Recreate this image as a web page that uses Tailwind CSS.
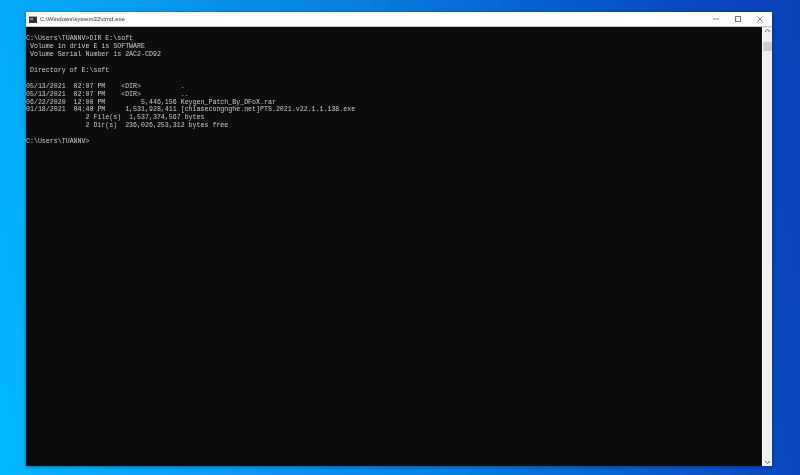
<!DOCTYPE html>
<html>
<head>
<meta charset="utf-8">
<script src="https://cdn.jsdelivr.net/npm/@tailwindcss/browser@4"></script>
</head>
<body class="m-0 w-[800px] h-[475px] overflow-hidden bg-[linear-gradient(78deg,#00b8ff_0%,#0a9ef0_25%,#0880e0_50%,#0660cc_72%,#0a48c0_88%,#0b42b8_100%)]">
<div class="pt-3 pl-[26px]">
<div class="w-[746px] h-[454px] flex flex-col bg-white shadow-[0_1px_4px_rgba(0,0,40,0.4)]">
  <div class="h-[15px] flex items-center bg-white border-b border-[#c8c8c8]">
    <svg class="ml-[3px] w-[8px] h-[7px]" viewBox="0 0 8 7"><rect width="8" height="7" fill="#333"/><rect x="0" y="0" width="8" height="1" fill="#aaa"/><rect x="1" y="2.500" width="3" height="1" fill="#ddd"/></svg>
    <span class="ml-[3px] text-[6.1px] leading-[8px] text-[#333] blur-[0.2px] font-['Liberation_Sans',sans-serif]">C:\Windows\system32\cmd.exe</span>
    <div class="ml-auto flex items-center h-full">
      <svg class="w-[6px] h-[6px] mr-[16px]" viewBox="0 0 6 6"><path d="M0 3h6" stroke="#888" stroke-width="1"/></svg>
      <svg class="w-[6px] h-[6px] mr-[16px]" viewBox="0 0 6 6"><rect x=".5" y=".5" width="5" height="5" fill="none" stroke="#777"/></svg>
      <svg class="w-[6px] h-[6px] mr-[9px]" viewBox="0 0 6 6"><path d="M.5.5l5 5M5.500.5l-5 5" stroke="#777"/></svg>
    </div>
  </div>
  <div class="flex-1 flex min-h-0">
    <div class="flex-1 bg-[#0c0c0c] overflow-hidden pt-[8px]">
    <pre class="m-0 text-[#cccccc] text-[6.62px] leading-[7.93px] blur-[0.25px] font-['Liberation_Mono',monospace]">C:\Users\TUANNV>DIR E:\soft
 Volume in drive E is SOFTWARE
 Volume Serial Number is 2AC2-CD92

 Directory of E:\soft

05/13/2021  02:07 PM    &lt;DIR&gt;          .
05/13/2021  02:07 PM    &lt;DIR&gt;          ..
06/22/2020  12:00 PM         5,446,156 Keygen_Patch_By_DFoX.rar
01/18/2021  04:40 PM     1,531,928,411 [chiasecongnghe.net]PTS.2021.v22.1.1.138.exe
               2 File(s)  1,537,374,567 bytes
               2 Dir(s)  236,026,253,312 bytes free

C:\Users\TUANNV></pre>
    </div>
    <div class="w-[9px] ml-px flex flex-col items-center bg-[#f0f0f0]">
      <svg class="w-[5px] h-[4px] mt-[2px]" viewBox="0 0 5 4"><path d="M0 3l2.500-2.500L5 3" fill="none" stroke="#666"/></svg>
      <div class="w-full h-[9px] mt-[9px] bg-[#cdcdcd]"></div>
      <svg class="w-[5px] h-[4px] mt-auto mb-[2px]" viewBox="0 0 5 4"><path d="M0 1l2.500 2.500L5 1" fill="none" stroke="#666"/></svg>
    </div>
  </div>
</div>
</div>
</body>
</html>
